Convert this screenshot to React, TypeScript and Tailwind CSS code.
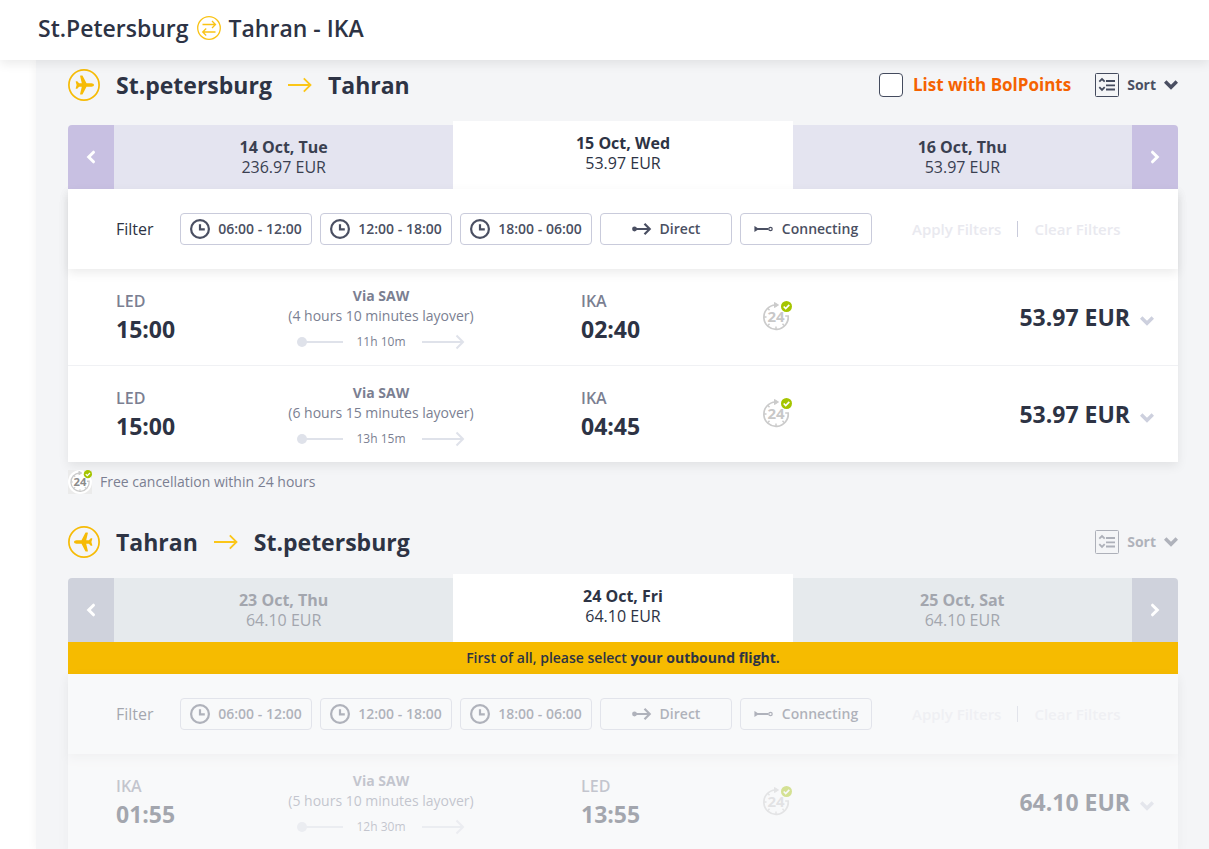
import { useState } from "react";
import clsx from "clsx";

type Flight = {
  from: string;
  to: string;
  departure: string;
  arrival: string;
  via: string;
  layover: string;
  duration: string;
  price: string;
};

type Day = { date: string; price: string };

const outboundDays: Day[] = [
  { date: "14 Oct, Tue", price: "236.97 EUR" },
  { date: "15 Oct, Wed", price: "53.97 EUR" },
  { date: "16 Oct, Thu", price: "53.97 EUR" },
];

const returnDays: Day[] = [
  { date: "23 Oct, Thu", price: "64.10 EUR" },
  { date: "24 Oct, Fri", price: "64.10 EUR" },
  { date: "25 Oct, Sat", price: "64.10 EUR" },
];

const outboundFlights: Flight[] = [
  {
    from: "LED",
    to: "IKA",
    departure: "15:00",
    arrival: "02:40",
    via: "Via SAW",
    layover: "(4 hours 10 minutes layover)",
    duration: "11h 10m",
    price: "53.97 EUR",
  },
  {
    from: "LED",
    to: "IKA",
    departure: "15:00",
    arrival: "04:45",
    via: "Via SAW",
    layover: "(6 hours 15 minutes layover)",
    duration: "13h 15m",
    price: "53.97 EUR",
  },
];

const returnFlights: Flight[] = [
  {
    from: "IKA",
    to: "LED",
    departure: "01:55",
    arrival: "13:55",
    via: "Via SAW",
    layover: "(5 hours 10 minutes layover)",
    duration: "12h 30m",
    price: "64.10 EUR",
  },
];

function SwapIcon() {
  return (
    <svg className="h-6 w-6" viewBox="0 0 24 24" fill="none" stroke="#f9c316" strokeWidth="1.3">
      <circle cx="12" cy="12" r="11.3" />
      <path d="M5.5 8.5h12.7M15 5l3.5 3.5L15 12M18.5 16H6M9.2 12.5L5.7 16l3.5 3.5" />
    </svg>
  );
}

function PlaneIcon({ flipped }: { flipped?: boolean }) {
  return (
    <svg className={clsx("h-8 w-8", flipped && "-scale-x-100")} viewBox="0 0 32 32">
      <circle cx="16" cy="16" r="15.1" fill="none" stroke="#f6bb06" strokeWidth="1.7" />
      <path
        fill="#f6bb06"
        d="M26 16c0-1-1.300-1.700-2.500-1.700h-5L14.600 6.800c-.2-.3-.5-.4-.8-.4h-1.200c-.4 0-.6.3-.5.700l1.700 7.200h-2.700L9.500 12.500c-.2-.2-.4-.3-.700-.3h-.7c-.3 0-.5.300-.4.600L8.600 16l-.9 3.200c-.1.300.1.600.4.600h.7c.3 0 .5-.1.7-.3l1.600-1.800h2.700l-1.700 7.200c-.1.400.1.700.5.700h1.200c.3 0 .6-.1.800-.4l3.900-7.500h5c1.200 0 2.500-.7 2.500-1.700z"
      />
    </svg>
  );
}

function RouteArrow() {
  return (
    <svg className="h-4 w-6" viewBox="0 0 24 16" fill="none" stroke="#fbc618" strokeWidth="1.8">
      <path d="M0 8h22.500M15.800 1.300L22.500 8l-6.700 6.700" />
    </svg>
  );
}

function SortIcon() {
  return (
    <svg className="h-6 w-6" viewBox="0 0 24 24" fill="none" stroke="#444b5e">
      <rect x="0.5" y="0.5" width="23" height="23" rx="1" />
      <path strokeWidth="1.800" d="M11 8h9M11 12.300h9M11 16.500h9" />
      <path strokeWidth="1.800" d="M4.300 8.700L7 6l2.700 2.700M4.300 14.200L7 16.900l2.700-2.700" />
    </svg>
  );
}

function Chevron({ className }: { className?: string }) {
  return (
    <svg className={className} viewBox="0 0 14 10" fill="none" stroke="currentColor" strokeWidth="3.500">
      <path d="M1.200 1.500L7 7.300l5.800-5.800" />
    </svg>
  );
}

function SideChevron({ next }: { next?: boolean }) {
  return (
    <svg
      className={clsx("h-4 w-3", next && "-scale-x-100")}
      viewBox="0 0 12 16"
      fill="none"
      stroke="#fff"
      strokeWidth="3"
      strokeLinecap="round"
    >
      <path d="M8.500 3.200L3.700 8l4.800 4.800" />
    </svg>
  );
}

function ClockIcon() {
  return (
    <svg className="h-5 w-5" viewBox="0 0 20 20" fill="none" stroke="#4a4f62">
      <circle cx="10" cy="10" r="8.900" strokeWidth="2.200" />
      <path d="M10 5.300v5h4.800" strokeWidth="2.200" />
    </svg>
  );
}

function DirectIcon() {
  return (
    <svg className="h-3 w-5" viewBox="0 0 20 12" fill="none" stroke="#4a4f62" strokeWidth="2.200">
      <circle cx="2.500" cy="6" r="2.400" fill="#4a4f62" stroke="none" />
      <path d="M2 6h16M12.500 .8L17.700 6l-5.200 5.200" />
    </svg>
  );
}

function ConnectingIcon() {
  return (
    <svg className="h-3 w-5" viewBox="0 0 20 12" fill="none" stroke="#4a4f62">
      <path d="M1 4l3 2-3 2z" fill="#4a4f62" strokeWidth="1.200" />
      <path d="M2 6h12.500" strokeWidth="2" />
      <circle cx="16.500" cy="6" r="1.700" strokeWidth="1.200" />
    </svg>
  );
}

function Cancel24Icon({ className, dark }: { className?: string; dark?: boolean }) {
  return (
    <svg className={className} viewBox="0 0 32 32" fill="none">
      {dark && <rect width="32" height="32" fill="#ebebeb" />}
      {dark && <circle cx="16" cy="16" r="16" fill="#fff" />}
      <path d="M15.500 4A12.200 12.200 0 1 0 28.200 15h-3" stroke="#cbcbcb" strokeWidth="1.700" />
      <path d="M14.500 1.500l4 2.500-4 2.500z" fill="#cbcbcb" stroke="#cbcbcb" />
      <path d="M16 25.500v3M4 16h2.500M8 7.500l1.500 1.700M8 24.500l1.500-1.700M24 24.500l-1.500-1.700" stroke="#cbcbcb" strokeWidth="1.400" />
      <text
        x="16"
        y="21"
        textAnchor="middle"
        fontSize="15"
        fontWeight="700"
        fill={dark ? "#8b8b8b" : "#c8c8c8"}
      >
        24
      </text>
      <circle cx="26.500" cy="5.500" r="5.500" fill="#a5c500" />
      <path d="M23.700 5.500l2 2 3.600-3.600" stroke="#fff" strokeWidth="1.700" />
    </svg>
  );
}

function SortButton() {
  return (
    <button className="flex items-center gap-2 text-sm font-bold text-[#4a4f62]">
      <SortIcon />
      Sort
      <Chevron className="h-[10px] w-[14px]" />
    </button>
  );
}

function RouteTitle({ from, to, flipped }: { from: string; to: string; flipped?: boolean }) {
  return (
    <h2 className="flex items-center gap-4 text-[23px] leading-8 font-bold text-[#2d3344]">
      <PlaneIcon flipped={flipped} />
      <span>{from}</span>
      <RouteArrow />
      <span>{to}</span>
    </h2>
  );
}

function DayTabs({ days, disabled }: { days: Day[]; disabled?: boolean }) {
  const arrow = clsx(
    "flex w-[46px] shrink-0 items-center justify-center",
    disabled ? "bg-[#cfd2dc]" : "bg-[#c8c0e2]"
  );
  return (
    <div className="flex h-16">
      <button className={clsx(arrow, "rounded-tl")} aria-label="Previous day">
        <SideChevron />
      </button>
      {days.map((day, i) => (
        <button
          key={day.date}
          className={clsx(
            "flex flex-1 flex-col items-center pt-3 text-base leading-5",
            i === 1 && "-mt-1 bg-white text-[#2d3344]",
            i !== 1 && !disabled && "bg-[#e4e4f0] text-[#3a3f50]",
            i !== 1 && disabled && "bg-[#e6eaed] text-[#a3a6ae]"
          )}
        >
          <span className="font-bold">{day.date}</span>
          <span>{day.price}</span>
        </button>
      ))}
      <button className={clsx(arrow, "rounded-tr")} aria-label="Next day">
        <SideChevron next />
      </button>
    </div>
  );
}

function FilterBar() {
  const chip =
    "flex h-8 w-[132px] items-center justify-center gap-2 rounded border border-[#c9cbdb] text-sm font-semibold whitespace-nowrap text-[#4a4f62]";
  return (
    <div className="relative flex h-20 items-center bg-white pl-12 shadow-[0_4px_10px_rgba(0,0,0,0.08)]">
      <span className="w-16 text-base font-medium text-[#2d3344]">Filter</span>
      <div className="flex gap-2">
        <button className={chip}>
          <ClockIcon />
          06:00 - 12:00
        </button>
        <button className={chip}>
          <ClockIcon />
          12:00 - 18:00
        </button>
        <button className={chip}>
          <ClockIcon />
          18:00 - 06:00
        </button>
        <button className={chip}>
          <DirectIcon />
          Direct
        </button>
        <button className={chip}>
          <ConnectingIcon />
          Connecting
        </button>
      </div>
      <div className="ml-10 flex items-center gap-4 text-[15px] font-semibold text-[#e9e9ef]">
        <button>Apply Filters</button>
        <span className="h-4 w-px bg-[#c9cbdb]" />
        <button>Clear Filters</button>
      </div>
    </div>
  );
}

function Airport({ code, time }: { code: string; time: string }) {
  return (
    <div>
      <div className="text-base leading-6 font-semibold text-[#7b7f92]">{code}</div>
      <div className="text-[23px] leading-8 font-bold text-[#2d3344]">{time}</div>
    </div>
  );
}

function FlightRow({ flight }: { flight: Flight }) {
  return (
    <li className="box-content grid h-24 grid-cols-[145fr_240fr_245fr_60fr_348fr] items-center pr-6 pl-12">
      <Airport code={flight.from} time={flight.departure} />
      <div className="pt-1 text-center text-sm leading-5 whitespace-nowrap text-[#7b7f92]">
        <div className="font-bold">{flight.via}</div>
        <div>{flight.layover}</div>
        <div className="mt-[6px] flex items-center justify-center gap-3 text-xs leading-5">
          <svg className="h-4 w-12" viewBox="0 0 48 16" stroke="#dfe2ea" strokeWidth="2" fill="none">
            <circle cx="6" cy="8" r="5" fill="#dfe2ea" stroke="none" />
            <path d="M6 8h41" />
          </svg>
          {flight.duration}
          <svg className="ml-1 h-4 w-11" viewBox="0 0 44 16" stroke="#dfe2ea" strokeWidth="2" fill="none">
            <path d="M0 8h41M34.500 1.500L41 8l-6.500 6.500" />
          </svg>
        </div>
      </div>
      <div className="pl-20">
        <Airport code={flight.to} time={flight.arrival} />
      </div>
      <Cancel24Icon className="h-8 w-8 justify-self-center" />
      <button className="flex items-center justify-end gap-[10px] text-[23px] leading-8 font-bold text-[#2d3344]">
        {flight.price}
        <Chevron className="mt-2 h-[10px] w-[14px] text-[#cdd0de]" />
      </button>
    </li>
  );
}

function FlightPanel({ flights }: { flights: Flight[] }) {
  return (
    <div className="bg-white shadow-[0_4px_10px_rgba(0,0,0,0.08)]">
      <FilterBar />
      <ul className="divide-y divide-[#f0f1f4]">
        {flights.map((flight) => (
          <FlightRow key={flight.arrival} flight={flight} />
        ))}
      </ul>
    </div>
  );
}

export default function App() {
  const [bolPoints, setBolPoints] = useState(false);

  return (
    <div className="flex h-screen flex-col overflow-hidden bg-white font-['Open_Sans','Noto_Sans',sans-serif]">
      <header className="relative z-10 flex h-[60px] shrink-0 items-center bg-white px-[38px] shadow-[0_4px_10px_rgba(0,0,0,0.08)]">
        <h1 className="flex items-center gap-2 pb-1 text-[23px] leading-8 font-semibold text-[#2d3344]">
          St.Petersburg
          <SwapIcon />
          Tahran - IKA
        </h1>
      </header>

      <main className="ml-9 flex-1 bg-[#f4f5f7] pt-[9px] pr-[31px] pl-8 shadow-[0_0_10px_rgba(0,0,0,0.05)]">
        <section>
          <div className="mb-6 flex items-center justify-between">
            <RouteTitle from="St.petersburg" to="Tahran" />
            <div className="flex items-center gap-6">
              <label className="flex items-center gap-[10px] text-[17px] leading-6 font-bold text-[#f56200]">
                <input
                  type="checkbox"
                  checked={bolPoints}
                  onChange={(e) => setBolPoints(e.target.checked)}
                  className="h-6 w-6 appearance-none rounded border border-[#444b5e] bg-white checked:bg-[#f56200]"
                />
                List with BolPoints
              </label>
              <SortButton />
            </div>
          </div>
          <DayTabs days={outboundDays} />
          <FlightPanel flights={outboundFlights} />
          <p className="mt-2 flex items-center gap-2 text-sm leading-6 text-[#7b7f92]">
            <Cancel24Icon className="h-6 w-6" dark />
            Free cancellation within 24 hours
          </p>
        </section>

        <section className="mt-8">
          <div className="mb-5 flex items-center justify-between">
            <RouteTitle from="Tahran" to="St.petersburg" flipped />
            <div className="opacity-40">
              <SortButton />
            </div>
          </div>
          <DayTabs days={returnDays} disabled />
          <p className="bg-[#f6bb00] py-[6px] text-center text-sm font-semibold text-[#2d3344]">
            First of all, please select <b className="font-bold">your outbound flight.</b>
          </p>
          <div className="opacity-40">
            <FlightPanel flights={returnFlights} />
          </div>
        </section>
      </main>
    </div>
  );
}
